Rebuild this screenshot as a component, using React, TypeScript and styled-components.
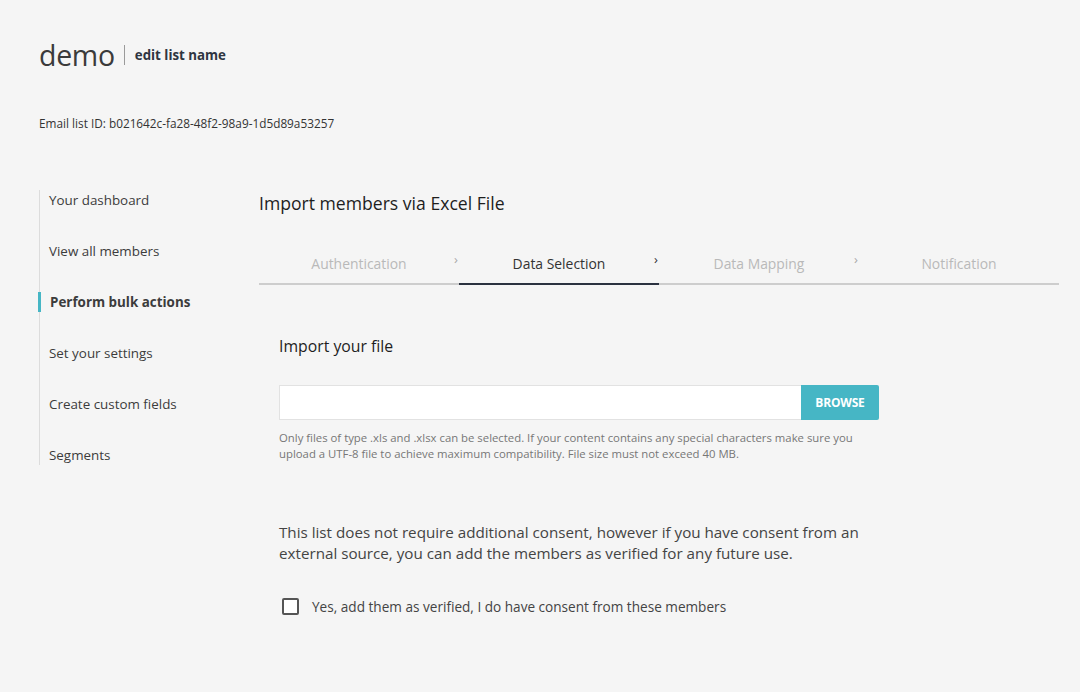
import React from "react";
import styled, { createGlobalStyle } from "styled-components";

const Global = createGlobalStyle`
  html, body { margin: 0; padding: 0; background: #f5f5f5; }
  body { font-family: "Open Sans", "Noto Sans", sans-serif; color: #333; }
  * { box-sizing: border-box; }
`;

const Page = styled.div`
  padding: 35px 0 0 39px;
  min-height: 692px;
`;

const Header = styled.div`
  display: flex;
  align-items: flex-start;
`;

const Title = styled.h1`
  margin: 0;
  font-size: 28.5px;
  font-weight: 400;
  color: #3b3b3b;
  line-height: 40px;
  letter-spacing: -0.3px;
`;

const Divider = styled.span`
  width: 1px;
  height: 20px;
  background: #9a9a9a;
  margin: 10px 10px 0 9px;
`;

const EditLink = styled.a`
  font-size: 13.3px;
  font-weight: 700;
  color: #2f3541;
  line-height: 20px;
  margin-top: 10px;
`;

const IdLine = styled.div`
  margin-top: 40px;
  font-size: 11.8px;
  line-height: 16px;
  color: #333;
`;

const Body = styled.div`
  display: flex;
  margin-top: 59px;
`;

const Sidebar = styled.nav`
  width: 220px;
  flex: none;
  border-left: 1px solid #dcdcdc;
  display: flex;
  flex-direction: column;
  gap: 31px;
  align-self: flex-start;
`;

const NavItem = styled.div<{ $active?: boolean }>`
  position: relative;
  padding-left: ${(p) => (p.$active ? 10 : 9)}px;
  font-size: 13.4px;
  line-height: 20px;
  color: #3c3c3c;
  font-weight: ${(p) => (p.$active ? 700 : 400)};
  &::before {
    content: "";
    display: ${(p) => (p.$active ? "block" : "none")};
    position: absolute;
    left: -2px;
    top: 0;
    width: 3px;
    height: 20px;
    background: #46b6c5;
  }
`;

const Main = styled.main`
  width: 800px;
`;

const Heading = styled.h2`
  margin: 0;
  font-size: 17.6px;
  font-weight: 400;
  line-height: 26px;
  color: #1e1e1e;
`;

const Tabs = styled.div`
  display: grid;
  grid-template-columns: repeat(4, 1fr);
  margin-top: 38px;
`;

const Tab = styled.div<{ $active?: boolean }>`
  position: relative;
  text-align: center;
  font-size: 13.9px;
  line-height: 20px;
  padding-bottom: 9px;
  color: ${(p) => (p.$active ? "#333" : "#b9b9b9")};
  border-bottom: 2px solid ${(p) => (p.$active ? "#2b3240" : "#cdcdcd")};
`;

const Chevron = styled.span<{ $dark?: boolean }>`
  position: absolute;
  right: 1px;
  top: -5px;
  font-size: 13px;
  line-height: 20px;
  color: ${(p) => (p.$dark ? "#333" : "#aaa")};
`;

const Content = styled.section`
  padding: 0 0 0 20px;
`;

const SubHeading = styled.h3`
  margin: 50px 0 0;
  font-size: 15.8px;
  font-weight: 500;
  line-height: 22px;
  color: #1e1e1e;
`;

const FileRow = styled.div`
  display: flex;
  width: 600px;
  height: 35px;
  margin-top: 28px;
`;

const FileInput = styled.div`
  flex: 1;
  background: #fff;
  border: 1px solid #e2e2e2;
  border-right: none;
`;

const BrowseButton = styled.button`
  width: 78px;
  border: none;
  background: #46b6c5;
  color: #fff;
  font-family: inherit;
  font-weight: 700;
  font-size: 12px;
  border-radius: 0 2px 2px 0;
  letter-spacing: -0.2px;
`;

const Help = styled.p`
  margin: 10px 0 0;
  width: 600px;
  font-size: 11.35px;
  line-height: 16px;
  color: #777;
`;

const Consent = styled.p`
  margin: 60px 0 0;
  width: 600px;
  font-size: 15.2px;
  line-height: 21px;
  color: #444;
`;

const CheckRow = styled.label`
  display: flex;
  align-items: center;
  gap: 13px;
  margin-top: 32px;
  padding-left: 3px;
  height: 20px;
`;

const Box = styled.span`
  width: 17px;
  height: 17px;
  border: 2px solid #555;
  border-radius: 2px;
  background: #fff;
`;

const CheckLabel = styled.span`
  font-size: 13.6px;
  color: #444;
`;

const navItems = [
  "Your dashboard",
  "View all members",
  "Perform bulk actions",
  "Set your settings",
  "Create custom fields",
  "Segments",
];

const tabs = ["Authentication", "Data Selection", "Data Mapping", "Notification"];

export default function App() {
  return (
    <>
      <Global />
      <Page>
        <Header>
          <Title>demo</Title>
          <Divider />
          <EditLink>edit list name</EditLink>
        </Header>
        <IdLine>Email list ID: b021642c-fa28-48f2-98a9-1d5d89a53257</IdLine>
        <Body>
          <Sidebar>
            {navItems.map((n) => (
              <NavItem key={n} $active={n === "Perform bulk actions"}>
                {n}
              </NavItem>
            ))}
          </Sidebar>
          <Main>
            <Heading>Import members via Excel File</Heading>
            <Tabs>
              {tabs.map((t, i) => (
                <Tab key={t} $active={i === 1}>
                  {t}
                  {i < 3 && <Chevron $dark={i === 1}>›</Chevron>}
                </Tab>
              ))}
            </Tabs>
            <Content>
              <SubHeading>Import your file</SubHeading>
              <FileRow>
                <FileInput />
                <BrowseButton>BROWSE</BrowseButton>
              </FileRow>
              <Help>
                Only files of type .xls and .xlsx can be selected. If your content contains any special characters make sure you upload a UTF-8 file to achieve maximum compatibility. File size must not exceed 40 MB.
              </Help>
              <Consent>
                This list does not require additional consent, however if you have consent from an external source, you can add the members as verified for any future use.
              </Consent>
              <CheckRow>
                <Box />
                <CheckLabel>Yes, add them as verified, I do have consent from these members</CheckLabel>
              </CheckRow>
            </Content>
          </Main>
        </Body>
      </Page>
    </>
  );
}
